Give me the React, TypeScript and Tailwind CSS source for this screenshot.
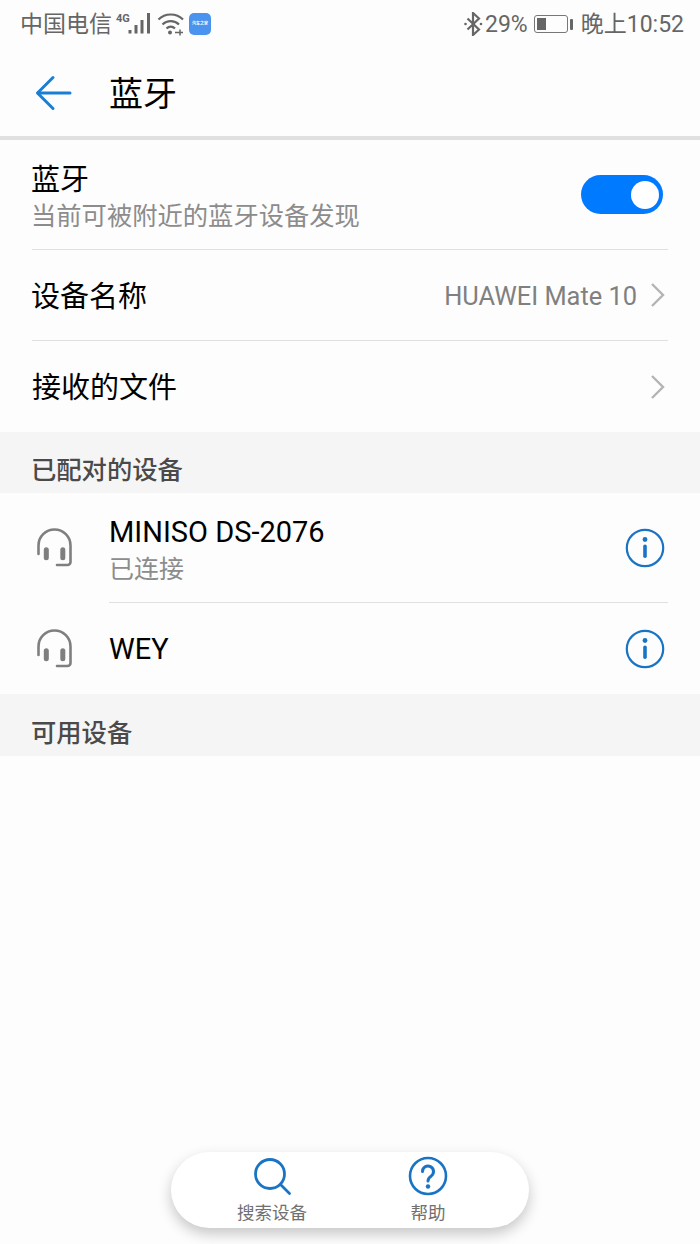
const FONT = "font-['Roboto','Noto_Sans_CJK_SC',sans-serif]";

function BackIcon() {
  return (
    <svg width="38" height="36" viewBox="0 0 38 36" fill="none" stroke="#1a7fd4" strokeWidth="3" strokeLinecap="round" strokeLinejoin="round">
      <path d="M35 18H3" />
      <path d="M18 2.500 2.500 18 18 33.500" />
    </svg>
  );
}

function Chevron() {
  return (
    <svg width="16" height="26" viewBox="0 0 16 26" fill="none" stroke="#b4b4b4" strokeWidth="2.4">
      <path d="M2 2l11 11L2 24" />
    </svg>
  );
}

function Headset() {
  return (
    <svg width="38" height="40" viewBox="0 0 38 40" fill="none" stroke="#7f7f7f" strokeWidth="2.6" strokeLinecap="round">
      <path d="M2.500 27V18.500a16 16 0 0 1 32 0V35a3 3 0 0 1-3 3H21" />
      <rect x="8.500" y="21" width="3.600" height="11.500" rx="1.800" fill="#7f7f7f" strokeWidth="1.400" />
      <rect x="25" y="21" width="3.600" height="11.500" rx="1.800" fill="#7f7f7f" strokeWidth="1.400" />
    </svg>
  );
}

function InfoIcon() {
  return (
    <svg width="40" height="40" viewBox="0 0 40 40" fill="none">
      <circle cx="20" cy="20" r="18.200" stroke="#1a74c4" strokeWidth="2.200" />
      <circle cx="20" cy="11.500" r="2.400" fill="#1a74c4" />
      <rect x="18.200" y="16.500" width="3.600" height="13.500" rx="1.800" fill="#1a74c4" />
    </svg>
  );
}

function StatusLeft() {
  return (
    <div className="flex items-center">
      <span className="text-[23px] leading-none text-[#666]">中国电信</span>
      <div className="relative ml-[4px] h-[24px] w-[36px]">
        <span className="absolute left-0 top-[1px] text-[11px] font-bold leading-none text-[#666]">4G</span>
        <svg className="absolute left-0 top-0" width="36" height="24" viewBox="0 0 36 24" fill="#666">
          <rect x="12.500" y="18" width="3" height="3.500" />
          <rect x="18.500" y="13" width="3" height="8.500" />
          <rect x="24.500" y="8" width="3" height="13.500" />
          <rect x="31" y="1" width="3" height="20.500" />
        </svg>
      </div>
      <svg className="ml-[5px]" width="28" height="24" viewBox="0 0 28 24" fill="none" stroke="#666" strokeWidth="2.200">
        <path d="M1.500 7.500C8 .8 19.500 .8 26 7.500" />
        <path d="M5.500 12.500c4.500-4.500 12-4.500 16.500 0" />
        <path d="M9.500 16.500c2.500-2.500 6-2.500 8.500 0" />
        <circle cx="13" cy="20.500" r="2" fill="#666" stroke="none" />
        <path d="M18 20.500h8M23 17.500v6" strokeWidth="1.500" />
      </svg>
      <div className="ml-[4px] flex h-[22px] w-[22px] items-center justify-center rounded-[5px] bg-[#4a93ee]">
        <span className="text-[4px] font-bold leading-none text-white">汽车之家</span>
      </div>
    </div>
  );
}

function StatusRight() {
  return (
    <div className="flex items-center">
      <svg width="19" height="24" viewBox="0 0 19 24" fill="none" stroke="#666" strokeWidth="2.200">
        <path d="M3.500 6.500l11.500 11-6 5.500V1l6 5.500-11.500 11" />
        <circle cx="1.500" cy="12" r="1.300" fill="#666" stroke="none" />
        <circle cx="17" cy="12" r="1.300" fill="#666" stroke="none" />
      </svg>
      <span className="ml-[2px] text-[23px] leading-none text-[#666]">29%</span>
      <div className="ml-[6px] flex items-center">
        <div className="h-[18px] w-[34px] rounded-[3px] border border-[#777] p-[2px]">
          <div className="h-full w-[9px] bg-[#666]" />
        </div>
        <div className="ml-[2px] h-[11px] w-[3px] rounded-[1px] bg-[#666]" />
      </div>
      <span className="ml-[8px] text-[23px] leading-none text-[#666]">晚上10:52</span>
    </div>
  );
}

function NavRow({ label, value, border, labelClass }: { label: string; value?: string; border?: boolean; labelClass: string }) {
  return (
    <div className={`mx-8 flex h-[91px] items-center justify-between ${border ? "border-b border-[#e0e0e0]" : ""}`}>
      <span className={`text-[29px] leading-none text-black ${labelClass}`}>{label}</span>
      <div className="mr-[2px] flex items-center">
        {value && <span className="mr-[13px] pt-[3px] text-[25.4px] leading-none text-[#808080]">{value}</span>}
        <Chevron />
      </div>
    </div>
  );
}

function SectionHeader({ label, height }: { label: string; height: string }) {
  return (
    <div className={`flex items-end bg-[#f5f5f5] pb-[4px] pl-[31px] ${height}`}>
      <span className="text-[25.3px] font-medium leading-[36px] text-[#4a4a4a]">{label}</span>
    </div>
  );
}

function DeviceRow({ name, status, height, border }: { name: string; status?: string; height: string; border?: boolean }) {
  return (
    <div className={`flex items-center ${height}`}>
      <div className="mb-[2px] ml-[36px] w-[73px] shrink-0">
        <Headset />
      </div>
      <div className={`mr-8 flex h-full flex-1 items-center justify-between ${border ? "border-b border-[#e0e0e0]" : ""}`}>
        <div className={`flex flex-col ${status ? "pt-[5px]" : ""}`}>
          <span className="text-[29px] leading-[38px] text-black">{name}</span>
          {status && <span className="mt-[1px] text-[25px] leading-[36px] text-[#8c8c8c]">{status}</span>}
        </div>
        <div className="mr-[3px]">
          <InfoIcon />
        </div>
      </div>
    </div>
  );
}

export default function App() {
  return (
    <div className={`relative flex h-[1244px] w-[700px] flex-col overflow-hidden bg-[#fdfdfd] ${FONT}`}>
      {/* Status bar */}
      <div className="flex h-[48px] items-center justify-between pl-[20px] pr-[16px]">
        <StatusLeft />
        <StatusRight />
      </div>

      {/* Title */}
      <div className="flex h-[88px] items-center pl-[35px] pt-[2px]">
        <BackIcon />
        <span className="ml-[36px] mt-[2px] text-[34px] leading-none text-black">蓝牙</span>
      </div>
      <div className="h-[4px] bg-[#e0e0e0]" />

      {/* Toggle row */}
      <div className="mx-8 flex h-[110px] items-center justify-between border-b border-[#e0e0e0]">
        <div className="ml-[-1px] flex flex-col pt-[6px]">
          <span className="text-[29px] leading-[38px] text-black">蓝牙</span>
          <span className="text-[25.3px] leading-[36px] text-[#8c8c8c]">当前可被附近的蓝牙设备发现</span>
        </div>
        <div className="mr-[5px] flex h-[39px] w-[82px] items-center justify-end rounded-full bg-[#007aff] pr-[4px]">
          <div className="h-[28px] w-[28px] rounded-full bg-white" />
        </div>
      </div>

      <NavRow label="设备名称" value="HUAWEI Mate 10" border labelClass="ml-[-1px] pt-[5px]" />
      <NavRow label="接收的文件" labelClass="pt-[3px]" />

      <SectionHeader label="已配对的设备" height="h-[61px]" />
      <DeviceRow name="MINISO DS-2076" status="已连接" height="h-[110px]" border />
      <DeviceRow name="WEY" height="h-[91px]" />
      <SectionHeader label="可用设备" height="h-[62px]" />

      {/* Bottom actions */}
      <div className="absolute left-[171px] top-[1152px] flex h-[76px] w-[358px] rounded-full bg-white shadow-[0_6px_14px_rgba(0,0,0,0.22)]">
        <div className="flex w-[202px] flex-col items-center pt-[6px]">
          <svg className="ml-[2px]" width="38" height="38" viewBox="0 0 38 38" fill="none" stroke="#1a74c4" strokeWidth="2.800" strokeLinecap="round">
            <circle cx="16" cy="16" r="14.500" />
            <path d="M27 27l8.500 8.500" />
          </svg>
          <span className="mt-[5px] text-[17.5px] leading-[24px] text-[#707070]">搜索设备</span>
        </div>
        <div className="flex w-[110px] flex-col items-center pt-[4px]">
          <svg width="40" height="40" viewBox="0 0 40 40" fill="none">
            <circle cx="20" cy="20" r="18" stroke="#1a74c4" strokeWidth="2.600" />
            <path d="M14.500 15.500a5.500 5.500 0 1 1 8.800 4.400c-2.300 1.600-3.300 2.300-3.300 5" stroke="#1a74c4" strokeWidth="3" strokeLinecap="round" />
            <circle cx="20" cy="30.500" r="2.200" fill="#1a74c4" />
          </svg>
          <span className="mt-[5px] text-[17.5px] leading-[24px] text-[#707070]">帮助</span>
        </div>
      </div>
    </div>
  );
}
